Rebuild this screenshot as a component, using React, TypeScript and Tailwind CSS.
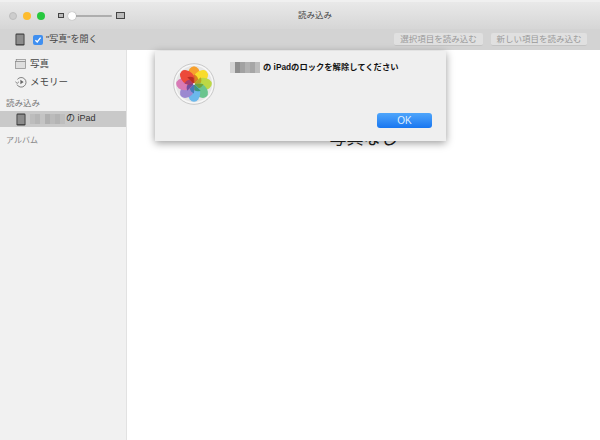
import React from 'react';

const font = { fontFamily: '"Liberation Sans", "Noto Sans CJK JP", sans-serif' };

const petals = ['#f6a02e', '#f8dc2c', '#bcd845', '#6ac48e', '#6bb8ec', '#9b88d0', '#d87ab6', '#ec4a3a'];
const shades = ['#d0691f', '#b89a1c', '#6f9e2c', '#2f8f62', '#2f75b5', '#5a4498', '#933a80', '#a9241f'];

const PhotosIcon = () => (
  <svg width="42" height="42" viewBox="0 0 42 42">
    <circle cx="21" cy="21" r="20.3" fill="#f7f7f7" stroke="#b4b4b4" strokeWidth="0.7" />
    <circle cx="21" cy="21" r="18.2" fill="#e6e6e6" />
    {petals.map((c, i) => (
      <ellipse key={i} cx="21" cy="12" rx="6.2" ry="8.8" fill={c} transform={`rotate(${i * 45} 21 21)`} />
    ))}
    {shades.map((c, i) => (
      <path key={i} d="M21 21 L21 11.5 Q24.6 13 25.2 16.4 Z" fill={c} fillOpacity="0.8" transform={`rotate(${i * 45} 21 21)`} />
    ))}
    <circle cx="21" cy="21" r="0.9" fill="#fff" />
  </svg>
);

const DeviceIcon = ({ className }: { className?: string }) => (
  <svg className={className} width="10" height="13" viewBox="0 0 10 13">
    <rect x="0.5" y="0.5" width="9" height="12" rx="1.2" fill="#3a3a3a" />
    <rect x="1.4" y="1.6" width="7.2" height="9.6" fill="#8c8c8c" />
  </svg>
);

const Mosaic = ({ cells, h = 'h-[11px]' }: { cells: string[]; h?: string }) => (
  <span className={`flex blur-[0.6px] ${h}`}>
    {cells.map((c, i) => (
      <span key={i} className="w-[5px] h-full" style={{ backgroundColor: c }} />
    ))}
  </span>
);

export default function App() {
  return (
    <div style={font} className="w-[600px] h-[440px] relative overflow-hidden bg-white flex flex-col text-[#333]">
      {/* title bar */}
      <div className="h-[29px] shrink-0 border-t-2 border-[#f0f0f0] bg-gradient-to-b from-[#e9e9e9] to-[#d6d6d6] flex items-center relative">
        <div className="flex gap-[6px] ml-[9px]">
          <span className="w-[8px] h-[8px] rounded-full bg-[#cdcdcd] border border-[#bdbdbd]" />
          <span className="w-[8px] h-[8px] rounded-full bg-[#fdbc2e]" />
          <span className="w-[8px] h-[8px] rounded-full bg-[#27c83f]" />
        </div>
        <div className="flex items-center ml-[13px]">
          <span className="w-[6px] h-[5px] border border-[#444] bg-[#bbb]" />
          <div className="relative w-[44px] h-[2px] bg-[#aeaeae] ml-[4px] rounded">
            <span className="absolute left-0 -top-[3px] w-[8px] h-[8px] rounded-full bg-white shadow-[0_0_1px_#777]" />
          </div>
          <span className="w-[9px] h-[7px] border border-[#444] bg-[#bbb] ml-[4px]" />
        </div>
        <span className="absolute left-[30px] right-0 text-center text-[8.5px] text-[#444]">読み込み</span>
      </div>

      {/* toolbar */}
      <div className="h-[21px] shrink-0 bg-[#d3d3d3] flex items-center">
        <DeviceIcon className="ml-[15px]" />
        <span className="ml-[8px] w-[10px] h-[10px] rounded-[2px] bg-[#3f8ff0] flex items-center justify-center">
          <svg width="8" height="8" viewBox="0 0 8 8">
            <path d="M1.4 4.2 L3.2 6 L6.6 1.6" fill="none" stroke="#fff" strokeWidth="1.3" />
          </svg>
        </span>
        <span className="ml-[3px] text-[9px] text-[#444]">"写真"を開く</span>
        <div className="ml-auto mr-[13px] flex gap-[8px]">
          <span className="w-[89px] h-[13px] rounded-[2px] bg-[#e0e0e0] border-b border-[#c4c4c4] text-[8.5px] text-[#999] flex items-center justify-center">選択項目を読み込む</span>
          <span className="w-[96px] h-[13px] rounded-[2px] bg-[#e0e0e0] border-b border-[#c4c4c4] text-[8.5px] text-[#999] flex items-center justify-center">新しい項目を読み込む</span>
        </div>
      </div>

      <div className="flex-1 flex min-h-0">
        {/* sidebar */}
        <aside className="w-[127px] shrink-0 bg-[#f1f1f1] border-r border-[#e2e2e2] flex flex-col">
          <div className="flex items-center h-[14px] mt-[7px] pl-[15px]">
            <svg width="11" height="10" viewBox="0 0 11 10" fill="none" stroke="#888" strokeWidth="0.7">
              <rect x="1.2" y="0.4" width="9.4" height="2" fill="#e8e8e8" />
              <rect x="0.4" y="2.4" width="10.2" height="7.2" fill="#dedede" />
            </svg>
            <span className="ml-[4px] text-[9.5px] text-[#444]">写真</span>
          </div>
          <div className="flex items-center h-[14px] mt-[4px] pl-[15px]">
            <svg width="12" height="12" viewBox="0 0 12 12" fill="none" stroke="#666" strokeWidth="0.8">
              <path d="M2.4 3.4 A4.8 4.8 0 1 1 2 8.6" />
              <path d="M0.4 5.8 L2.2 7.4 L3.9 5.8" />
              <path d="M5.4 3.8 L8.6 6 L5.4 8.2 Z" fill="#666" stroke="none" />
            </svg>
            <span className="ml-[3px] text-[9.5px] text-[#444]">メモリー</span>
          </div>
          <div className="mt-[8px] pl-[6px] h-[12px] flex items-center text-[8.5px] text-[#777]">読み込み</div>
          <div className="mt-[2px] h-[16px] bg-[#c9c9c9] flex items-center pl-[16px]">
            <DeviceIcon />
            <span className="ml-[4px]">
              <Mosaic cells={['#bdbdbd', '#b6b6b6', '#c4c4c4', '#b0b0b0', '#bbbbbb', '#b4b4b4', '#bebebe']} h="h-[10px]" />
            </span>
            <span className="ml-[1px] text-[9px] text-[#333]">の iPad</span>
          </div>
          <div className="mt-[8px] pl-[6px] h-[12px] flex items-center text-[8px] text-[#888]">アルバム</div>
        </aside>

        {/* main */}
        <main className="flex-1 flex justify-center pt-[77px]">
          <span className="text-[17px] leading-[24px] text-[#222]">写真なし</span>
        </main>
      </div>

      {/* sheet over the window */}
      <div className="absolute left-[155px] top-[51px] w-[291px] h-[90px] bg-[#efefef] shadow-[0_2px_8px_rgba(0,0,0,0.4)] flex">
        <div className="ml-[18px] mt-[12px]">
          <PhotosIcon />
        </div>
        <div className="ml-[15px] mt-[11px] flex items-start">
          <Mosaic cells={['#d4d4d4', '#8e8e8e', '#a2a2a2', '#b2b2b2', '#a6a6a6', '#bcbcbc']} />
          <span className="ml-[3px] text-[8.3px] leading-[11px] font-bold text-[#111]">の iPadのロックを解除してください</span>
        </div>
        <button className="absolute left-[222px] top-[62px] w-[55px] h-[15px] rounded-[3px] bg-gradient-to-b from-[#4ea5fb] to-[#1776f0] text-[10px] text-[#dfeeff] flex items-center justify-center">OK</button>
      </div>
    </div>
  );
}
